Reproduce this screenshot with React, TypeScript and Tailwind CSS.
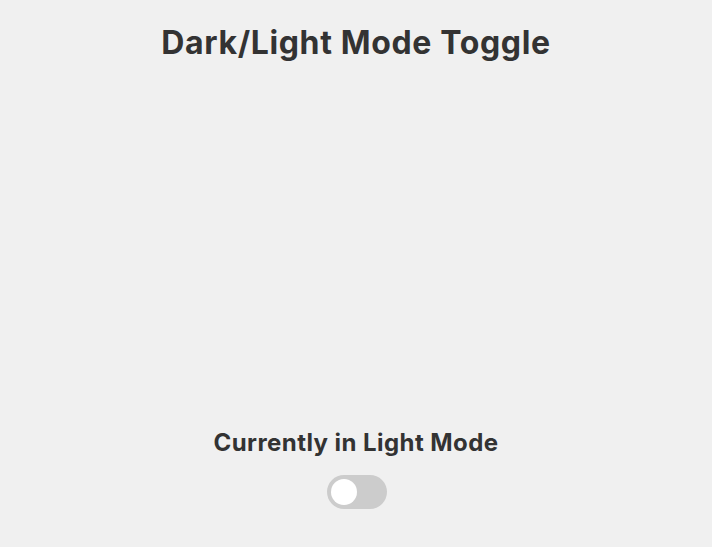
import { useState } from 'react';

export default function App() {
  const [dark, setDark] = useState(false);

  return (
    <div
      className={`min-h-screen flex flex-col items-center ${dark ? 'bg-[#1e1e1e] text-[#f0f0f0]' : 'bg-[#f0f0f0] text-[#333333]'}`}
      style={{ fontFamily: 'Inter, "Open Sans", sans-serif' }}
    >
      <h1 className="mt-[22px] text-[32px] leading-[42px] font-bold tracking-[0.02em]">Dark/Light Mode Toggle</h1>

      <div className="h-[363px]" />

      <h2 className="text-[24px] leading-[32px] font-bold tracking-[0.018em]">
        Currently in {dark ? 'Dark' : 'Light'} Mode
      </h2>

      <button
        type="button"
        onClick={() => setDark(!dark)}
        className={`mt-[16px] ml-[2px] w-[60px] h-[34px] rounded-full p-1 flex items-center ${dark ? 'bg-[#2196f3] justify-end' : 'bg-[#cccccc] justify-start'}`}
      >
        <span className="block w-[26px] h-[26px] rounded-full bg-white" />
      </button>
    </div>
  );
}
